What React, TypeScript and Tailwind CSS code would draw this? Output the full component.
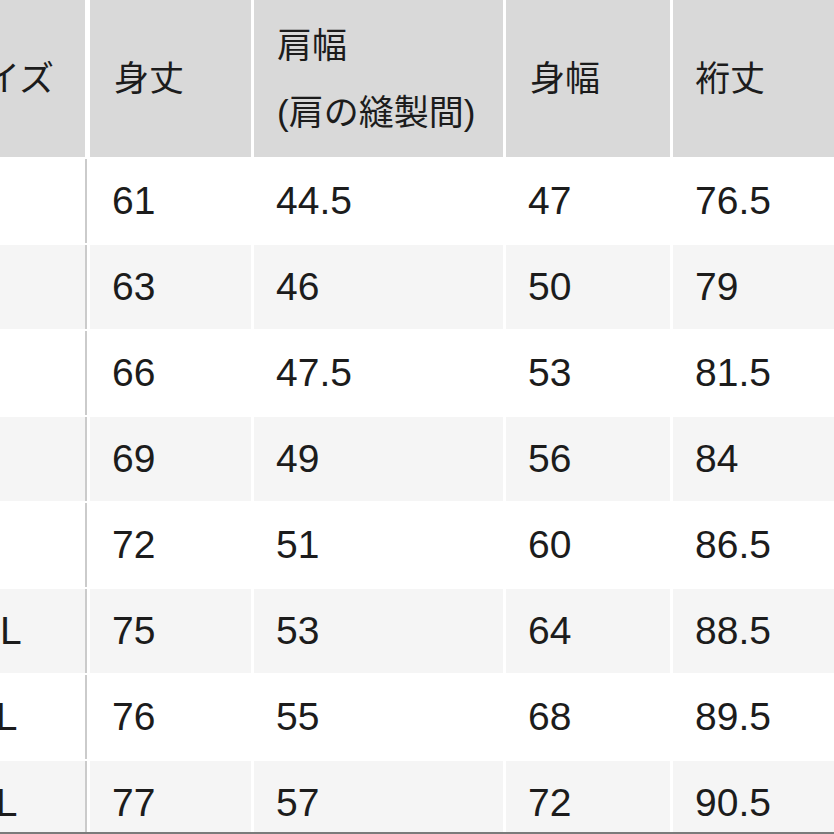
import { twMerge } from "tailwind-merge"

type SizeRow = {
    size: string
    length: string
    shoulder: string
    width: string
    sleeve: string
}

const rows: SizeRow[] = [
    { size: "XS", length: "61", shoulder: "44.5", width: "47", sleeve: "76.5" },
    { size: "S", length: "63", shoulder: "46", width: "50", sleeve: "79" },
    { size: "M", length: "66", shoulder: "47.5", width: "53", sleeve: "81.5" },
    { size: "L", length: "69", shoulder: "49", width: "56", sleeve: "84" },
    { size: "XL", length: "72", shoulder: "51", width: "60", sleeve: "86.5" },
    { size: "XXL", length: "75", shoulder: "53", width: "64", sleeve: "88.5" },
    { size: "3XL", length: "76", shoulder: "55", width: "68", sleeve: "89.5" },
    { size: "4XL", length: "77", shoulder: "57", width: "72", sleeve: "90.5" }
]

function HeadCell({
    className,
    children
}: {
    className?: string
    children: React.ReactNode
}) {
    const classes = twMerge(
        "flex items-center h-[157px] bg-[#d9d9d9] pl-[24px] text-[35px] leading-[67px]",
        className
    )
    return <div className={classes}>{children}</div>
}

function BodyCell({
    striped,
    className,
    children
}: {
    striped: boolean
    className?: string
    children?: React.ReactNode
}) {
    const classes = twMerge(
        "flex items-center h-[84px] pl-[22px] text-[39px]",
        striped ? "bg-[#f5f5f5]" : "bg-white",
        className
    )
    return <div className={classes}>{children}</div>
}

export default function App() {
    return (
        <div
            className="h-[834px] w-[834px] overflow-hidden bg-white border-b-2 border-[#7b7b7b] text-[#1c1c1c]"
            style={{ fontFamily: '"Liberation Sans", "Noto Sans CJK JP", sans-serif' }}>
            <div className="-ml-[74px] grid grid-cols-[161px_161px_249px_164px_240px] gap-x-[3px] gap-y-[2px]">
                <HeadCell className="border-r-2 border-white">サイズ</HeadCell>
                <HeadCell>身丈</HeadCell>
                <HeadCell className="pl-[23px]">
                    <div>
                        <div>肩幅</div>
                        <div>(肩の縫製間)</div>
                    </div>
                </HeadCell>
                <HeadCell>身幅</HeadCell>
                <HeadCell className="pl-[22px]">裄丈</HeadCell>

                {rows.map((row, i) => {
                    const striped = i % 2 === 1
                    return [
                        <BodyCell
                            key={row.size + "-size"}
                            striped={striped}
                            className="border-r-2 border-[#cbcbcb]">
                            {row.size}
                        </BodyCell>,
                        <BodyCell key={row.size + "-length"} striped={striped}>
                            {row.length}
                        </BodyCell>,
                        <BodyCell key={row.size + "-shoulder"} striped={striped}>
                            {row.shoulder}
                        </BodyCell>,
                        <BodyCell key={row.size + "-width"} striped={striped}>
                            {row.width}
                        </BodyCell>,
                        <BodyCell key={row.size + "-sleeve"} striped={striped}>
                            {row.sleeve}
                        </BodyCell>
                    ]
                })}
            </div>
        </div>
    )
}
